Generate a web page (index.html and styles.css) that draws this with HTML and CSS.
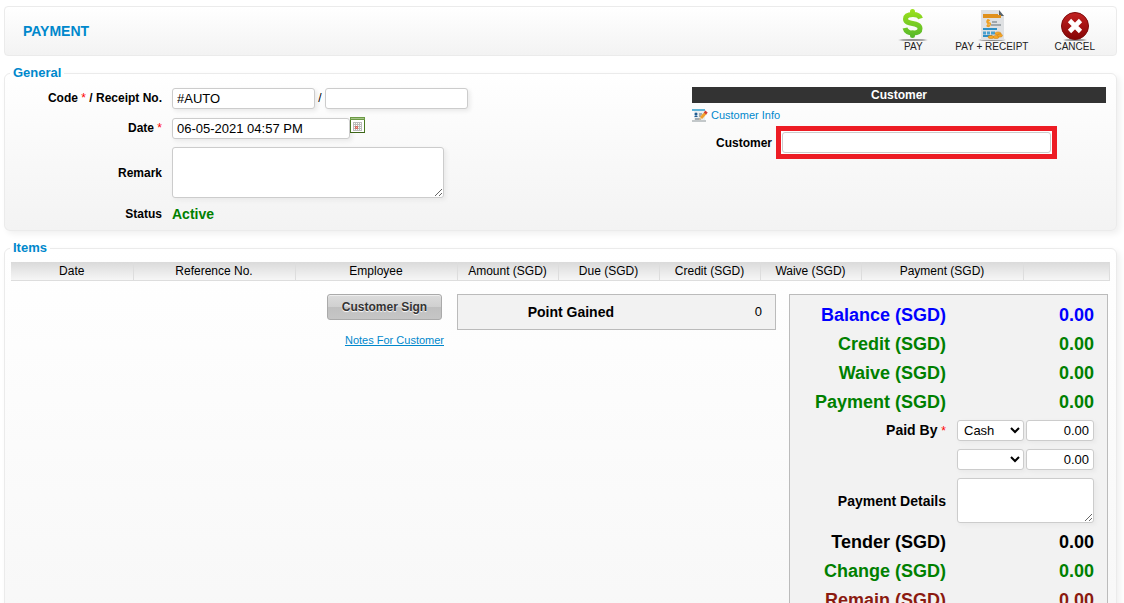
FILE: index.html
```html
<!DOCTYPE html>
<html lang="en">
<head>
  <meta charset="UTF-8" />
  <meta name="viewport" content="width=device-width, initial-scale=1.0"/>
  <title>Payment</title>
  <link rel="stylesheet" href="styles.css">
</head>
<body>
  <header class="toolbar">
    <h1>PAYMENT</h1>
    <div class="actions">
      <button type="button" class="action">
        <svg width="32" height="32" viewBox="0 0 32 32" aria-hidden="true">
          <defs>
            <linearGradient id="green" x1="0" y1="1" x2="0" y2="31" gradientUnits="userSpaceOnUse">
              <stop offset="0" stop-color="#9be01c"/>
              <stop offset="1" stop-color="#4fb52c"/>
            </linearGradient>
            <radialGradient id="shadow">
              <stop offset="0" stop-color="#777"/>
              <stop offset="0.7" stop-color="#aaa"/>
              <stop offset="1" stop-color="#aaa" stop-opacity="0"/>
            </radialGradient>
          </defs>
          <ellipse cx="16" cy="31" rx="16" ry="1.500" fill="url(#shadow)"/>
          <g fill="none" stroke="url(#green)">
            <path stroke-width="5" d="M23.5 9.500C22.5 6.500 20 5.500 16 5.500C11.500 5.500 8.500 7 8.500 10C8.500 16.500 23 12.500 23 19.500C23 23 20 24 16 24C11.500 24 9 23 8 19"/>
            <path stroke-width="5" stroke-linecap="round" d="M15.500 2.500V5M15.500 24V26.500"/>
          </g>
        </svg>
        PAY
      </button>
      <button type="button" class="action">
        <svg width="32" height="32" viewBox="0 0 32 32" aria-hidden="true">
          <ellipse cx="16" cy="31" rx="15" ry="1.500" fill="url(#shadow)"/>
          <path d="M5 1h18l5 6v24H5z" fill="#dfe1e3"/>
          <path d="M23 1l5 6h-5z" fill="#59646c"/>
          <path d="M7 5h15v1h3v3H7z" fill="#e0911d"/>
          <path d="M14 11.500q-3-1-3 1t2 1.500 1 2-3.500.5M12 10v8" fill="none" stroke="#f0a020" stroke-width="1.500"/>
          <path d="M16 13h5M15 16h10" stroke="#8a949b" stroke-width="1.500"/>
          <path d="M7 20h14M7 27h8v2" fill="none" stroke="#2d8fc4" stroke-width="2"/>
          <path d="M7 24h3m1 0h3m1 0h4" stroke="#4aa0cf" stroke-width="3"/>
          <g fill="#f6a623" stroke="#c87a10" stroke-width=".5">
            <ellipse cx="22" cy="24.500" rx="3" ry="1.600"/>
            <ellipse cx="15" cy="28" rx="3" ry="1.600"/>
            <ellipse cx="20" cy="28" rx="3" ry="1.600"/>
            <ellipse cx="24" cy="26.500" rx="2.500" ry="1.600"/>
          </g>
        </svg>
        PAY + RECEIPT
      </button>
      <button type="button" class="action">
        <svg width="32" height="32" viewBox="0 0 32 32" aria-hidden="true">
          <defs>
            <linearGradient id="red" x1="0" y1="0" x2="0" y2="1">
              <stop offset="0" stop-color="#c32222"/>
              <stop offset="1" stop-color="#860505"/>
            </linearGradient>
          </defs>
          <ellipse cx="16" cy="31" rx="13" ry="1.500" fill="url(#shadow)"/>
          <circle cx="16" cy="17" r="13.500" fill="url(#red)" stroke="#7d0a0a"/>
          <path d="M10.500 11.500l11 11M21.500 11.500l-11 11" stroke="#fff" stroke-width="4.600"/>
        </svg>
        CANCEL
      </button>
    </div>
  </header>

  <fieldset class="panel general">
    <legend>General</legend>
    <div class="columns">
      <div class="form">
        <div class="label"><label for="code">Code <span class="req">*</span></label> / <label for="receipt">Receipt No.</label></div>
        <div class="field">
          <input type="text" id="code" class="short" value="#AUTO" />
          <span class="slash">/</span>
          <input type="text" id="receipt" class="short" />
        </div>

        <label class="label" for="date">Date <span class="req">*</span></label>
        <div class="field">
          <input type="text" id="date" class="medium" value="06-05-2021 04:57 PM" />
          <button type="button" class="calendar" aria-label="Pick a date">
            <svg width="15" height="16" viewBox="0 0 15 16">
              <path d="M.5.500h14v15H.5z" fill="#fff" stroke="#4a7a22"/>
              <path d="M0 0h15v3H0z" fill="#6c9a45"/>
              <path d="M1 1h13v1H1z" fill="#a5c588"/>
              <path d="M0 15h15v1H0z" fill="#3c6418"/>
              <path d="M3 5h9v9H3z" fill="#bbb"/>
              <path d="M4 6h1v1H4zM6 6h1v1H6zM8 6h1v1H8zM10 6h1v1h-1zM4 8h1v1H4zM6 8h1v1H6zM8 8h1v1H8zM10 8h1v1h-1zM4 10h1v1H4zM8 10h1v1H8zM10 10h1v1h-1zM4 12h1v1H4zM6 12h1v1H6zM8 12h1v1H8zM10 12h1v1h-1z" fill="#fff"/>
              <path d="M5.500 9.500h2v2h-2z" fill="#f7b5ae" stroke="#d9635a"/>
            </svg>
          </button>
        </div>

        <label class="label" for="remark">Remark</label>
        <textarea id="remark" class="remark"></textarea>

        <span class="label">Status</span>
        <span class="status">Active</span>
      </div>

      <section class="customer">
        <h2>Customer</h2>
        <a href="#" class="info">
          <svg width="16" height="16" viewBox="0 0 16 16" aria-hidden="true">
            <path d="M2 4h11v9H2z" fill="#e9eef1"/>
            <path d="M0 2h13v2H0z" fill="#5fb4d8"/>
            <path d="M0 13h14v2H0z" fill="#c3c8ca"/>
            <circle cx="4" cy="7" r="1.500" fill="#1f5c93"/>
            <path d="M2 10q2-3 4 0z" fill="#1f5c93"/>
            <path d="M7 7h3M7 9h2M3 12h6" stroke="#5a6870"/>
            <path d="M9 11l4.500-5" stroke="#f0a02c" stroke-width="3"/>
            <path d="M13 6.500l1.500-2" stroke="#d23c32" stroke-width="3"/>
            <path d="M7 13l1-3 2 2z" fill="#e8c48e"/>
          </svg>
          Customer Info
        </a>
        <div class="customer-row">
          <label for="customer">Customer</label>
          <div class="highlight"><input type="text" id="customer" /></div>
        </div>
      </section>
    </div>
  </fieldset>

  <fieldset class="panel items">
    <legend>Items</legend>
    <table>
      <colgroup>
        <col class="c-date">
        <col class="c-wide" span="2">
        <col class="c-money" span="4">
        <col class="c-wide">
        <col>
      </colgroup>
      <thead>
        <tr>
          <th>Date</th>
          <th>Reference No.</th>
          <th>Employee</th>
          <th>Amount (SGD)</th>
          <th>Due (SGD)</th>
          <th>Credit (SGD)</th>
          <th>Waive (SGD)</th>
          <th>Payment (SGD)</th>
          <th></th>
        </tr>
      </thead>
      <tbody></tbody>
    </table>

    <div class="summary">
      <div class="sign">
        <button type="button" class="btn">Customer Sign</button>
        <a href="#">Notes For Customer</a>
      </div>

      <div class="box points">
        <span class="name">Point Gained</span>
        <span class="value">0</span>
      </div>

      <div class="box totals">
        <div class="row blue"><span class="name">Balance (SGD)</span><span class="value">0.00</span></div>
        <div class="row green"><span class="name">Credit (SGD)</span><span class="value">0.00</span></div>
        <div class="row green"><span class="name">Waive (SGD)</span><span class="value">0.00</span></div>
        <div class="row green"><span class="name">Payment (SGD)</span><span class="value">0.00</span></div>
        <div class="row small">
          <label class="name" for="paidBy">Paid By <span class="req">*</span></label>
          <div class="value pay">
            <select id="paidBy"><option>Cash</option><option>Card</option></select>
            <input type="text" value="0.00" aria-label="Amount" />
          </div>
        </div>
        <div class="row small">
          <span class="name"></span>
          <div class="value pay">
            <select aria-label="Second payment type"><option></option><option>Cash</option><option>Card</option></select>
            <input type="text" value="0.00" aria-label="Second amount" />
          </div>
        </div>
        <div class="row small details">
          <label class="name" for="details">Payment Details</label>
          <textarea id="details" class="value"></textarea>
        </div>
        <div class="row"><span class="name">Tender (SGD)</span><span class="value">0.00</span></div>
        <div class="row green"><span class="name">Change (SGD)</span><span class="value">0.00</span></div>
        <div class="row maroon"><span class="name">Remain (SGD)</span><span class="value">0.00</span></div>
      </div>
    </div>
  </fieldset>
</body>
</html>
```
FILE: styles.css
```css
* {
  box-sizing: border-box;
}
body {
  font-family: Arial, "Liberation Sans", sans-serif;
  font-size: 12px;
  line-height: 16px;
  color: #000;
  background: #fff;
  margin: 0;
  padding: 6px 7px 8px 4px;
}
a {
  color: #0088cc;
}
button {
  font-family: inherit;
  cursor: pointer;
}
input, select, textarea {
  font-family: inherit;
  font-size: 13px;
  color: #000;
  background: #fff;
  margin: 0;
  padding: 0 4px;
  height: 21px;
  border: 1px solid #ccc;
  border-radius: 3px;
  box-shadow: 2px 2px 4px #e8e8e8;
}
.req {
  color: red;
  font-size: 12px;
  font-weight: normal;
}

/* toolbar */
.toolbar {
  display: flex;
  justify-content: space-between;
  align-items: center;
  height: 50px;
  padding: 0 21px 0 18px;
  border: 1px solid #ebebeb;
  border-radius: 4px;
  background: linear-gradient(#fff, #f3f3f3);
}
.toolbar h1 {
  margin: 0;
  font-size: 14px;
  color: #0088cc;
}
.actions {
  display: flex;
  gap: 26px;
}
.action {
  display: flex;
  flex-direction: column;
  align-items: center;
  padding: 0;
  border: none;
  background: none;
  font-size: 10px;
  line-height: 12px;
  color: #222;
}

/* panels */
.panel {
  min-width: 0;
  margin: 9px 0 0;
  padding: 6px 6px 8px;
  border: 1px solid #ebebeb;
  border-radius: 6px;
  background: linear-gradient(#fff, #f3f3f3);
  box-shadow: 3px 3px 6px #f0f0f0;
}
.panel legend {
  padding: 0 3px;
  margin-left: -1px;
  font-size: 13px;
  font-weight: bold;
  color: #0088cc;
}
.columns {
  display: flex;
  justify-content: space-between;
  align-items: flex-start;
  padding-right: 4px;
}
.form {
  display: grid;
  grid-template-columns: 151px auto;
  gap: 8px 10px;
  align-items: center;
}
.label {
  text-align: right;
  font-weight: bold;
}
.field {
  display: flex;
  align-items: center;
  height: 22px;
}
.short {
  width: 143px;
}
.medium {
  width: 178px;
}
.slash {
  width: 10px;
  text-align: center;
}
.calendar {
  display: flex;
  padding: 0;
  border: none;
  background: none;
  align-self: flex-start;
}
textarea {
  display: block;
}
.remark {
  width: 272px;
  height: 51px;
}
.status {
  font-size: 14px;
  font-weight: bold;
  color: green;
}

/* customer */
.customer {
  width: 414px;
}
.customer h2 {
  margin: 0 0 4px;
  background: #333;
  color: #fff;
  font-size: 12px;
  text-align: center;
}
.info {
  display: flex;
  gap: 3px;
  font-size: 11px;
  text-decoration: none;
}
.customer-row {
  display: flex;
  align-items: center;
  margin-top: 3px;
  gap: 4px;
}
.customer-row label {
  width: 80px;
  text-align: right;
  font-weight: bold;
}
.highlight {
  padding: 1px;
  border: 5px solid #ed1c24;
  background: #fff;
}
.highlight input {
  display: block;
  width: 269px;
  box-shadow: none;
}

/* items */
.items {
  min-height: 600px;
}
.items table {
  width: 100%;
  table-layout: fixed;
  border-collapse: collapse;
}
.items th {
  height: 18px;
  padding: 0;
  border-right: 1px solid #ddd;
  border-bottom: 1px solid #ddd;
  background: linear-gradient(#dadada, #f6f6f6);
  font-weight: normal;
  line-height: 18px;
}
.c-date {
  width: 122px;
}
.c-wide {
  width: 162px;
}
.c-money {
  width: 101px;
}
.summary {
  display: flex;
  justify-content: flex-end;
  align-items: flex-start;
  gap: 13px;
  padding: 13px 2px 0 0;
}
.sign {
  display: flex;
  flex-direction: column;
  align-items: flex-end;
  gap: 12px;
  font-size: 11px;
}
.btn {
  width: 115px;
  height: 26px;
  margin-right: 2px;
  padding: 0;
  border: 1px solid #aaa;
  border-radius: 3px;
  background: linear-gradient(#dcdcdc, #d0d0d0 50%, #c0c0c0 50%, #c6c6c6);
  box-shadow: inset 0 1px 0 #eee;
  font-size: 12px;
  font-weight: bold;
  color: #333;
  text-shadow: 0 1px 1px #fff;
}
.box {
  width: 319px;
  border: 1px solid #bbb;
  background: #f2f2f2;
}
.box .name {
  width: 156px;
  text-align: right;
  font-weight: bold;
}
.box .value {
  width: 137px;
}
.points {
  display: flex;
  justify-content: space-between;
  align-items: center;
  height: 36px;
  padding-right: 13px;
  font-size: 14px;
}
.points .value {
  text-align: right;
  font-size: 13px;
}
.totals {
  padding: 5px 13px 5px 0;
}
.row {
  display: flex;
  justify-content: space-between;
  align-items: center;
  height: 29px;
  font-size: 18px;
  font-weight: bold;
}
.row .value {
  text-align: right;
}
.row.small {
  font-size: 14px;
}
.row.details {
  height: 53px;
}
.row textarea {
  height: 45px;
}
.row textarea.value {
  text-align: left;
}
.pay {
  display: flex;
  gap: 2px;
}
.pay select {
  width: 67px;
  padding: 0 2px;
}
.pay input {
  width: 68px;
  text-align: right;
}
.blue {
  color: blue;
}
.green {
  color: green;
}
.maroon {
  color: #8b1a10;
}
```
